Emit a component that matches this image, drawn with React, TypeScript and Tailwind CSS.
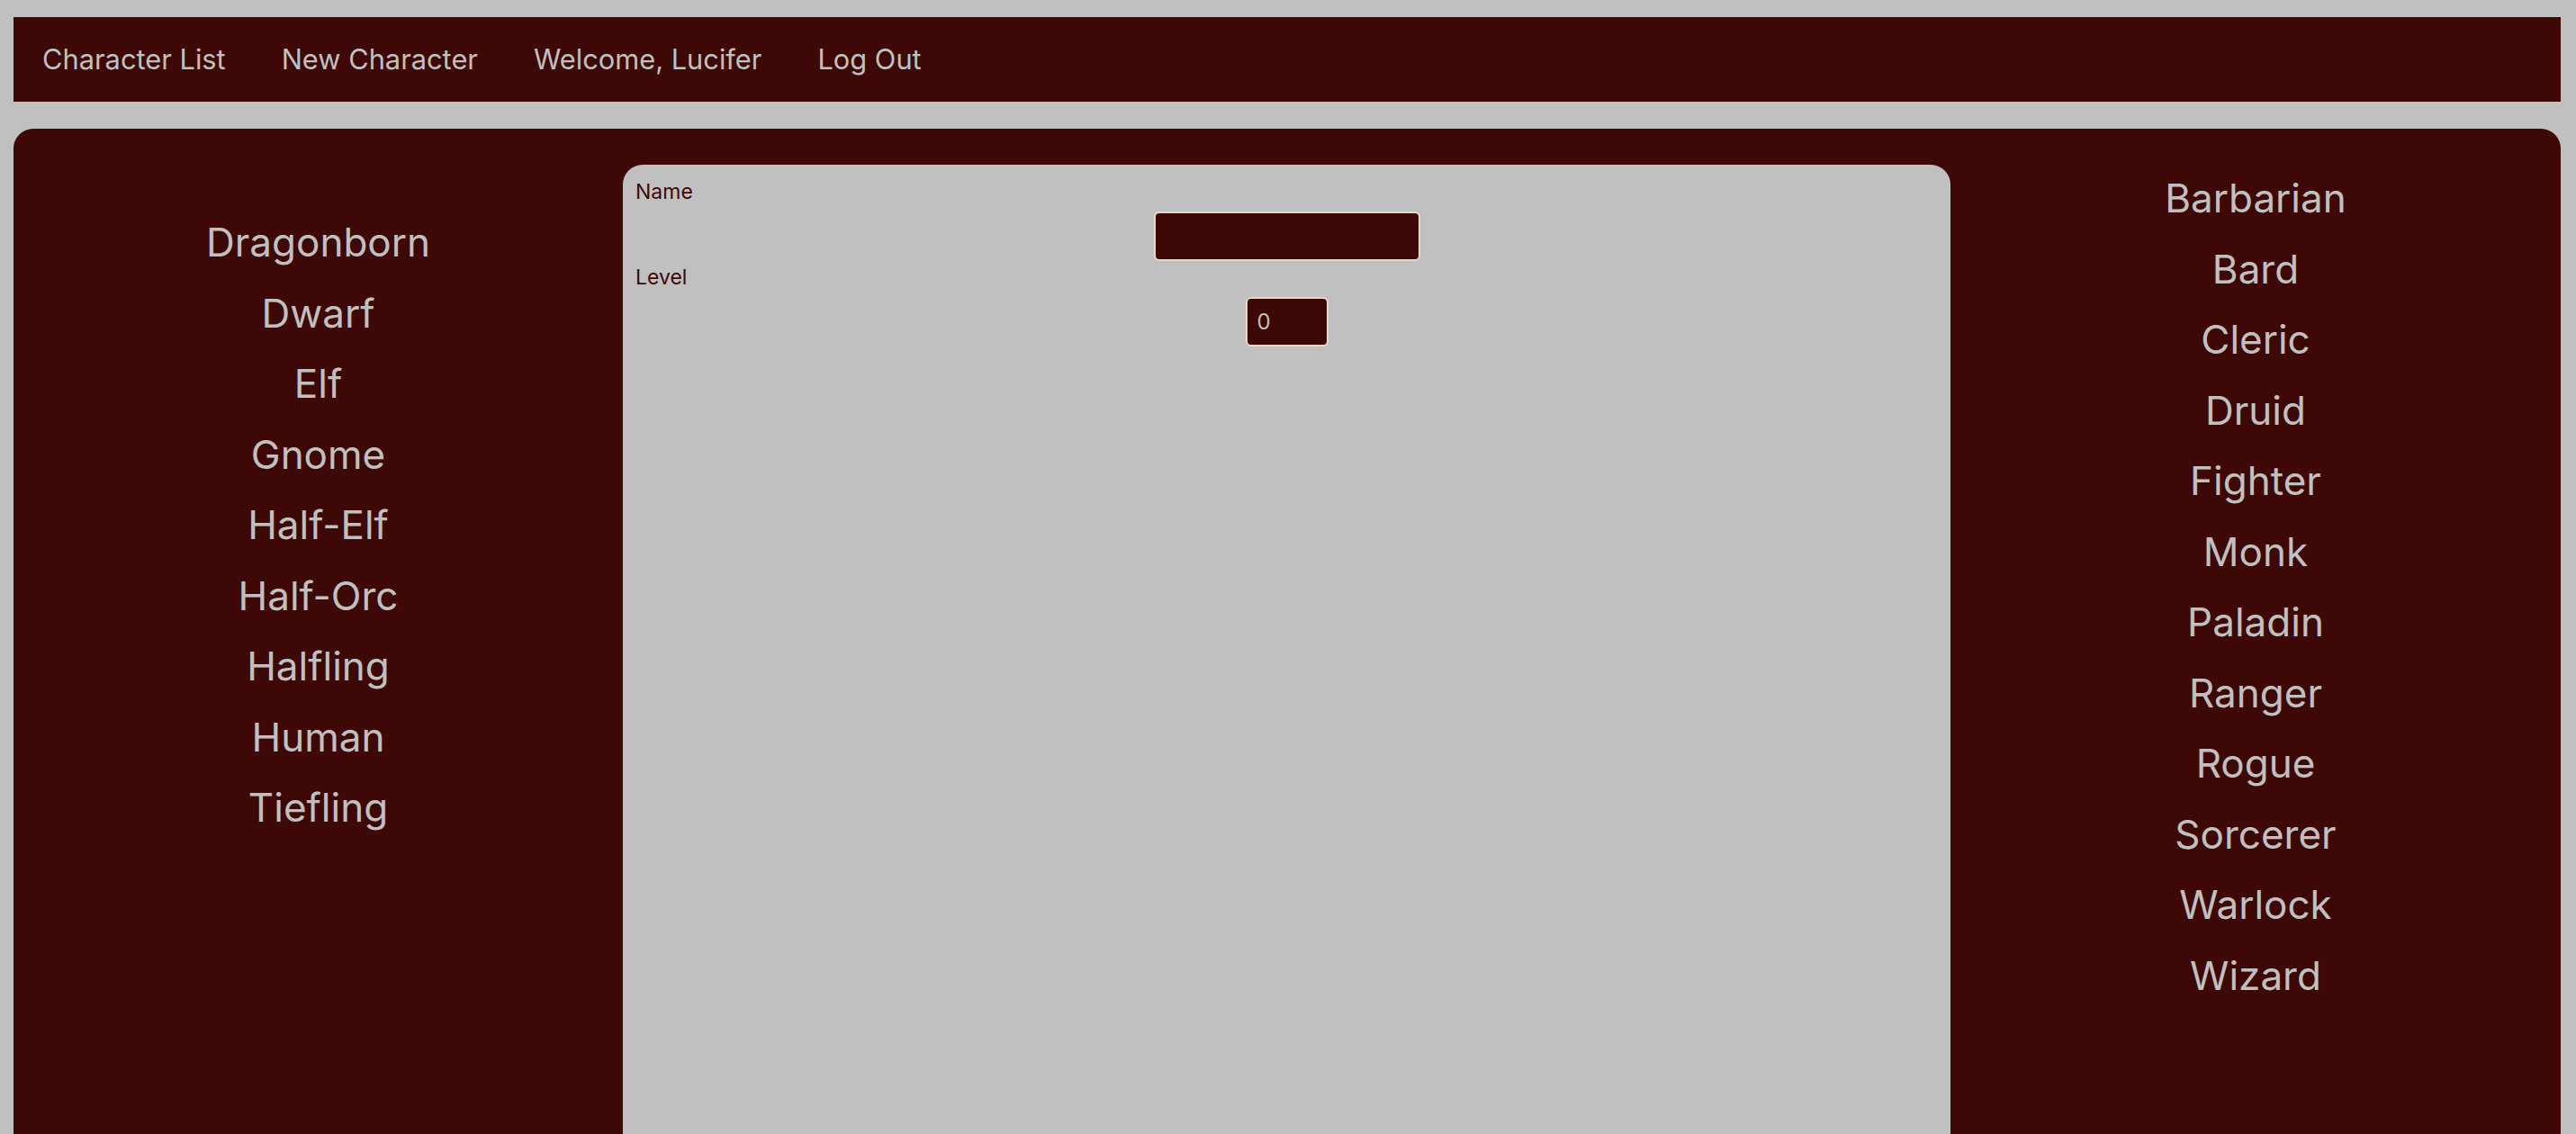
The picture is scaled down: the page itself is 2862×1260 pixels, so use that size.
const races = ["Dragonborn", "Dwarf", "Elf", "Gnome", "Half-Elf", "Half-Orc", "Halfling", "Human", "Tiefling"];
const classes = ["Barbarian", "Bard", "Cleric", "Druid", "Fighter", "Monk", "Paladin", "Ranger", "Rogue", "Sorcerer", "Warlock", "Wizard"];

const navLinks = ["Character List", "New Character", "Welcome, Lucifer", "Log Out"];

function OptionList({ items, className }: { items: string[]; className: string }) {
    return (
        <ul className={className}>
            {items.map((item) => (
                <li key={item} className="text-center text-[44px] leading-[78.5px] text-[#c0c0c0]">
                    {item}
                </li>
            ))}
        </ul>
    );
}

export default function App() {
    return (
        <div className="h-[1260px] overflow-hidden bg-[#c0c0c0] pt-[19px] pl-[15px] pr-[17px] font-['Inter',sans-serif]">
            <nav className="flex h-[94px] items-center bg-[#3d0805] px-[32px]">
                {navLinks.map((link) => (
                    <a key={link} className="mr-[62px] text-[30.8px] text-[#c0c0c0]">
                        {link}
                    </a>
                ))}
            </nav>

            <main className="mt-[30px] flex h-[1117px] rounded-t-[22px] bg-[#3d0805]">
                <OptionList items={races} className="w-[677px] shrink-0 pt-[87px]" />

                <section className="mt-[40px] w-[1475px] shrink-0 rounded-t-[22px] bg-[#c0c0c0] px-[14px] pt-[16px] text-[23px] text-[#3d0805]">
                    <label className="block leading-[28px]">Name</label>
                    <div className="mt-[8px] flex justify-center">
                        <input
                            type="text"
                            className="h-[55px] w-[296px] rounded-[6px] border-2 border-[#e6d9cc] bg-[#3d0805] px-3 text-[#c0c0c0] outline-none"
                        />
                    </div>
                    <label className="mt-[4px] block leading-[28px]">Level</label>
                    <div className="mt-[8px] flex justify-center">
                        <input
                            type="number"
                            defaultValue={0}
                            className="h-[55px] w-[92px] rounded-[6px] border-2 border-[#e6d9cc] bg-[#3d0805] px-[11px] text-[24px] text-[#c0c0c0] outline-none [appearance:textfield]"
                        />
                    </div>
                </section>

                <OptionList items={classes} className="flex-1 pt-[38px]" />
            </main>
        </div>
    );
}
